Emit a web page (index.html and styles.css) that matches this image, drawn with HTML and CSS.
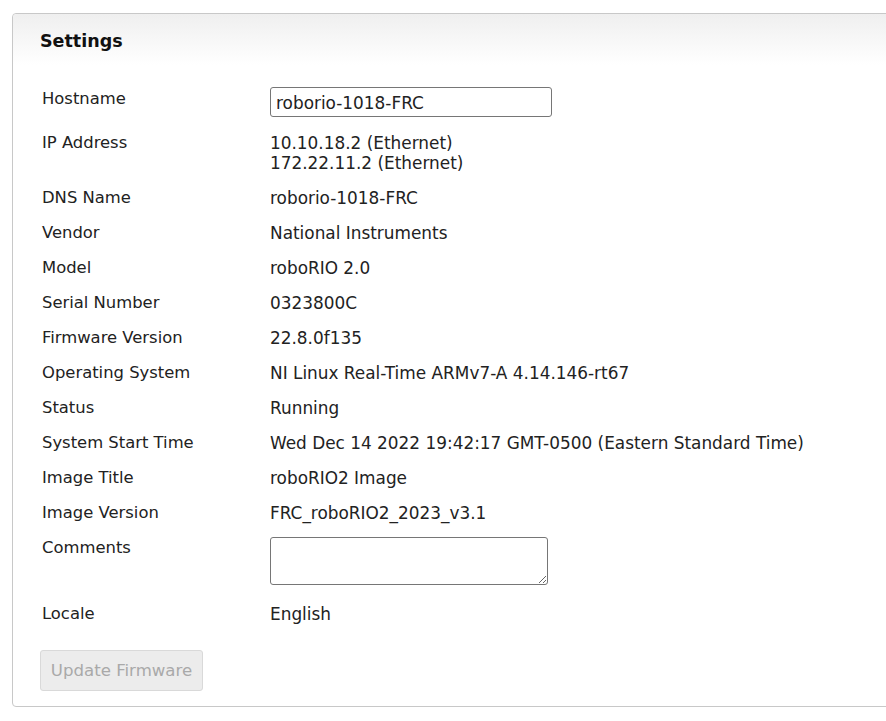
FILE: index.html
```html
<!DOCTYPE html>
<html>
<head>
<meta charset="utf-8">
<link rel="stylesheet" href="styles.css">
</head>
<body>
<div class="panel">
  <div class="panel-header">Settings</div>
  <div class="panel-body">
    <div class="grid">
      <div class="label">Hostname</div>
      <div class="value"><input class="text-input" type="text" value="roborio-1018-FRC"></div>

      <div class="label">IP Address</div>
      <div class="value">10.10.18.2 (Ethernet)<br>172.22.11.2 (Ethernet)</div>

      <div class="label">DNS Name</div>
      <div class="value">roborio-1018-FRC</div>

      <div class="label">Vendor</div>
      <div class="value">National Instruments</div>

      <div class="label">Model</div>
      <div class="value">roboRIO 2.0</div>

      <div class="label">Serial Number</div>
      <div class="value">0323800C</div>

      <div class="label">Firmware Version</div>
      <div class="value">22.8.0f135</div>

      <div class="label">Operating System</div>
      <div class="value">NI Linux Real-Time ARMv7-A 4.14.146-rt67</div>

      <div class="label">Status</div>
      <div class="value">Running</div>

      <div class="label">System Start Time</div>
      <div class="value">Wed Dec 14 2022 19:42:17 GMT-0500 (Eastern Standard Time)</div>

      <div class="label">Image Title</div>
      <div class="value">roboRIO2 Image</div>

      <div class="label">Image Version</div>
      <div class="value">FRC_roboRIO2_2023_v3.1</div>

      <div class="label">Comments</div>
      <div class="value"><textarea class="comments"></textarea></div>

      <div class="label">Locale</div>
      <div class="value">English</div>
    </div>
    <button class="btn" disabled>Update Firmware</button>
  </div>
</div>
</body>
</html>
```
FILE: styles.css
```css
html, body {
  overflow: hidden;
}
body {
  margin: 0;
  padding: 13px 0 0 12px;
  background: #fff;
  font-family: "DejaVu Sans", Verdana, sans-serif;
  font-size: 16px;
  color: #222;
}
.panel {
  width: 920px;
  border: 1px solid #c8c8c8;
  border-radius: 4px;
  background: #fff;
}
.panel-header {
  padding: 17px 27px 14px;
  line-height: 20px;
  font-size: 17.5px;
  font-weight: bold;
  color: #111;
  background: linear-gradient(to bottom, #efefef 0%, #ffffff 100%);
  border-radius: 4px 4px 0 0;
}
.panel-body {
  padding: 24px 29px 15px 27px;
}
.grid {
  display: grid;
  grid-template-columns: 230px 1fr;
  row-gap: 15px;
  line-height: 20px;
}
.label {
  padding-left: 2px;
  font-size: 16.4px;
}
.value {
  font-size: 16.9px;
}
.text-input {
  display: block;
  margin-top: -2px;
  margin-bottom: 1px;
  width: 282px;
  height: 30px;
  box-sizing: border-box;
  border: 1px solid #767676;
  border-radius: 3px;
  padding: 2px 5px 0;
  font-family: inherit;
  font-size: 16.9px;
  color: #222;
}
.comments {
  display: block;
  margin-top: -1px;
  margin-bottom: 4px;
  width: 278px;
  height: 48px;
  box-sizing: border-box;
  border: 1px solid #767676;
  border-radius: 3px;
  font-family: inherit;
  font-size: 16px;
}
.btn {
  margin-top: 26px;
  width: 163px;
  height: 41px;
  border: 1px solid #d9d9d9;
  border-radius: 3px;
  background: #ececec;
  color: #a9a9a9;
  font-family: inherit;
  font-size: 16.6px;
  padding: 0;
}
```
